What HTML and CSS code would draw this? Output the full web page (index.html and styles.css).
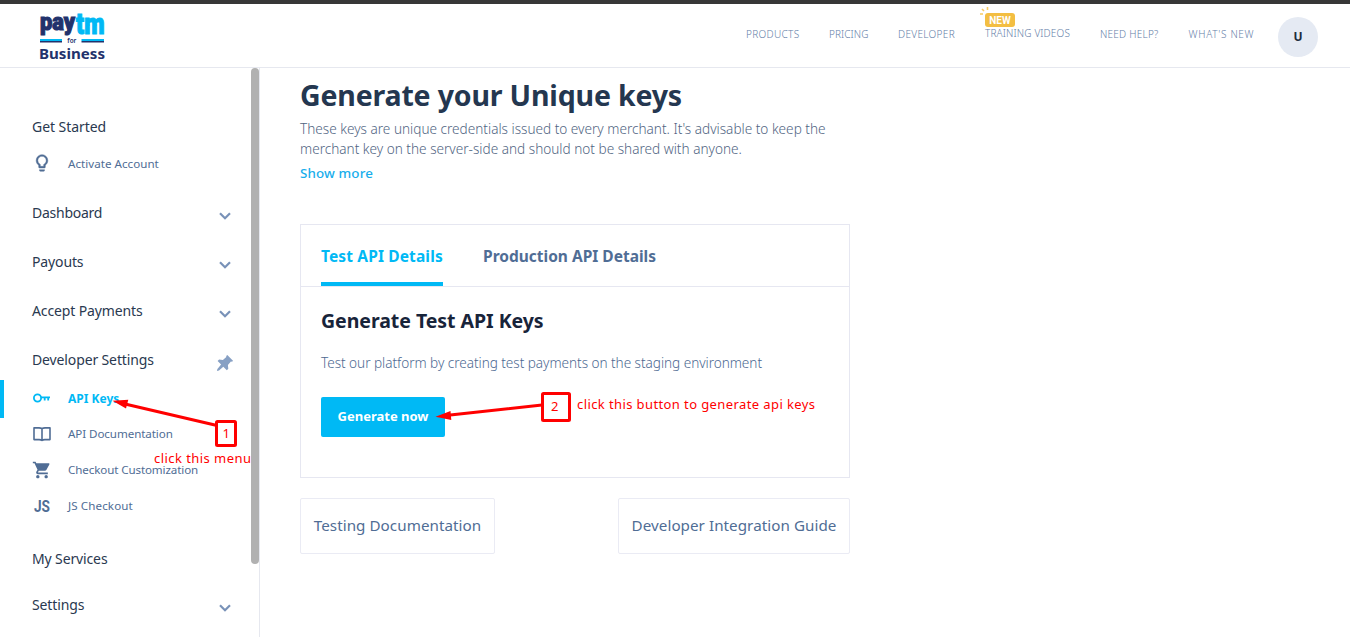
FILE: index.html
```html
<!DOCTYPE html>
<html lang="en">
<head>
<meta charset="utf-8">
<title>Generate your Unique keys</title>
<link rel="stylesheet" href="styles.css">
</head>
<body>
<header class="header">
  <svg class="logo" width="70" height="50" viewBox="38 12 70 50" role="img" aria-label="Paytm for Business">
    <g class="logo-brand">
      <text class="navy" font-size="23" x="40" y="30.3" textLength="35" lengthAdjust="spacingAndGlyphs">pay</text>
      <text class="cyan" font-size="29" x="76" y="33.500" textLength="28.5" lengthAdjust="spacingAndGlyphs">tm</text>
    </g>
    <path class="cyan" d="M40 39h22v2H40zM81.500 39H104v2H81.500z"/>
    <path class="navy" d="M40 41h22v1.500H40zM81.500 41H104v1.500H81.500z"/>
    <text class="navy logo-for" x="67.300" y="43" textLength="9" lengthAdjust="spacingAndGlyphs">for</text>
    <text class="navy logo-business" x="39" y="58.500" textLength="66" lengthAdjust="spacingAndGlyphs">Business</text>
  </svg>
  <nav class="nav">
    <a class="nav-products">PRODUCTS</a>
    <a class="nav-pricing">PRICING</a>
    <a class="nav-developer">DEVELOPER</a>
    <a class="nav-training">TRAINING VIDEOS
      <span class="badge">NEW</span>
      <svg class="spark" width="12" height="10" viewBox="0 0 12 10"><path d="M1 7h3M3 2l2 2M8.500 0v3" fill="none" stroke="#f6ca62" stroke-width="1.600"/></svg>
    </a>
    <a class="nav-help">NEED HELP?</a>
    <a class="nav-new">WHAT'S NEW</a>
  </nav>
  <div class="avatar">U</div>
</header>
<div class="body">
  <aside class="sidebar">
    <div class="menu">
      <div class="section first">Get Started</div>
      <div class="item"><svg class="icon" width="20" height="20" viewBox="0 0 24 24"><path fill="currentColor" stroke="currentColor" stroke-width=".5" d="M9 21c0 .6.400 1 1 1h4c.6 0 1-.400 1-1v-1H9v1zm3-19C8.100 2 5 5.100 5 9c0 2.400 1.200 4.500 3 5.700V17c0 .6.400 1 1 1h6c.6 0 1-.400 1-1v-2.300c1.800-1.300 3-3.400 3-5.700 0-3.900-3.100-7-7-7zm2.900 11.100-.900.600V16h-4v-2.300l-.800-.600A5 5 0 0 1 7 9a5 5 0 0 1 10 0c0 1.600-.800 3.200-2.100 4.100z"/></svg><span class="t-activate">Activate Account</span></div>
      <div class="section t-dash">Dashboard<svg class="chev" width="12" height="8" viewBox="0 0 12 8"><path d="M1 1.200l5 5 5-5"/></svg></div>
      <div class="section">Payouts<svg class="chev" width="12" height="8" viewBox="0 0 12 8"><path d="M1 1.200l5 5 5-5"/></svg></div>
      <div class="section">Accept Payments<svg class="chev" width="12" height="8" viewBox="0 0 12 8"><path d="M1 1.200l5 5 5-5"/></svg></div>
      <div class="section">Developer Settings<svg class="pin" width="18" height="18" viewBox="0 0 18 18"><path fill="#87a0c4" d="M11.300 1 17 6.700l-.900 1-1.200-.100-3 3.400.4 3.700-1.500 1.500-3.500-3.400L3 16.500.9 17l.5-2.100 3.700-4.300L1.600 7l1.500-1.500 3.800.4L10.300 3l-.100-1.100z"/></svg></div>
      <div class="item active"><svg class="icon" width="20" height="20" viewBox="0 0 20 20"><g fill="none" stroke="currentColor"><circle cx="5.500" cy="10" r="3.600" stroke-width="1.800"/><path stroke-width="1.800" d="M9 9.400h9M12.700 9.400v3.200M16.200 9.400v3.200"/></g></svg><span>API Keys</span></div>
      <div class="item doc"><svg class="icon" width="20" height="20" viewBox="0 0 20 20"><path fill="none" stroke="currentColor" stroke-width="1.600" stroke-linejoin="round" d="M10 4.500C9 4 8 3.900 7 3.900H2v11.700h5.200c1.200 0 2.100.3 2.800.9.700-.6 1.600-.9 2.800-.9H18V3.900h-5c-1 0-2 .1-3 .6zM10 4.500v12"/></svg><span>API Documentation</span></div>
      <div class="item cart"><svg class="icon" width="20" height="20" viewBox="0 0 24 24"><path fill="currentColor" d="M7 18c-1.100 0-2 .9-2 2s.9 2 2 2 2-.9 2-2-.9-2-2-2zM1 2v2h2l3.600 7.600L5.200 14c-.2.300-.2.600-.2 1 0 1.100.9 2 2 2h12v-2H7.400c-.100 0-.200-.100-.200-.200V14.600l.900-1.600h7.400c.8 0 1.400-.4 1.700-1l3.600-6.500C21.200 4.700 20.700 4 20 4H5.200l-.9-2H1zm16 16c-1.100 0-2 .9-2 2s.9 2 2 2 2-.9 2-2-.9-2-2-2z"/></svg><span>Checkout Customization</span></div>
      <div class="item js"><svg class="icon js-icon" width="20" height="20" viewBox="0 0 20 20"><text x="2" y="16.300" textLength="16" lengthAdjust="spacingAndGlyphs">JS</text></svg><span>JS Checkout</span></div>
      <div class="section services">My Services</div>
      <div class="section settings">Settings<svg class="chev" width="12" height="8" viewBox="0 0 12 8"><path d="M1 1.200l5 5 5-5"/></svg></div>
    </div>
    <div class="scroll-thumb"></div>
  </aside>
  <main class="main">
    <h1>Generate your Unique keys</h1>
    <p class="intro">These keys are unique credentials issued to every merchant. It's advisable to keep the<br>merchant key on the server-side and should not be shared with anyone.</p>
    <a class="more">Show more</a>
    <section class="card">
      <div class="tabs">
        <div class="tab selected">Test API Details</div>
        <div class="tab">Production API Details</div>
      </div>
      <div class="panel">
        <h2>Generate Test API Keys</h2>
        <p class="desc">Test our platform by creating test payments on the staging environment</p>
        <button class="generate">Generate now</button>
      </div>
    </section>
    <div class="links">
      <a class="link testing">Testing Documentation</a>
      <a class="link guide">Developer Integration Guide</a>
    </div>
  </main>
</div>
<svg class="notes" width="1350" height="637" viewBox="0 0 1350 637">
  <path class="note-line" d="M217 425.500 125 404M542 405 448 415.300"/>
  <path class="note-head" d="M112.500 400.800 128.300 399.800 126 408.600zM435.500 416.800 450.500 411 451.300 420z"/>
  <rect class="note-box" x="216.500" y="421.500" width="19" height="24" rx="1"/>
  <rect class="note-box" x="542.500" y="393.500" width="27" height="27" rx="1"/>
  <text x="222.500" y="438">1</text>
  <text x="551" y="411">2</text>
  <text x="154" y="463" textLength="97">click this menu</text>
  <text x="577" y="409" textLength="238">click this button to generate api keys</text>
</svg>
</body>
</html>
```

FILE: styles.css
```css
* { box-sizing: border-box; }
body {
  margin: 0;
  height: 637px;
  overflow: hidden;
  background: #fff;
  font-family: "Noto Sans", "Open Sans", sans-serif;
  color: #2a3950;
}
h1, h2, p { margin: 0; }

.header {
  height: 68px;
  border-top: 4px solid #373737;
  border-bottom: 1px solid #e6e8ef;
  display: flex;
  align-items: flex-start;
  padding: 8px 32px 0 38px;
}
.logo { flex: none; overflow: visible; }
.navy { fill: #22326c; }
.cyan { fill: #00b9f5; }
.logo-brand { font-family: Roboto, sans-serif; font-weight: 900; stroke-width: 1.1; }
.logo-brand .navy { stroke: #22326c; }
.logo-brand .cyan { stroke: #00b9f5; }
.logo-for { font-size: 7.5px; font-weight: 600; }
.logo-business { font-size: 14.5px; font-weight: 700; }

.nav {
  margin-left: auto;
  display: flex;
  font-size: 10px;
  font-weight: 300;
  line-height: 14px;
  color: #6580a8;
  white-space: nowrap;
  padding-top: 15px;
}
.nav a { flex: none; }
.nav-products { width: 83px; letter-spacing: 0.32px; }
.nav-pricing { width: 69px; letter-spacing: 0.09px; }
.nav-developer { width: 87px; letter-spacing: 0.33px; }
.nav-training { width: 115px; letter-spacing: 0.15px; position: relative; top: -1px; }
.nav-help { width: 88.5px; letter-spacing: 0.24px; }
.nav-new { width: 89.5px; letter-spacing: 0.7px; }
.badge {
  position: absolute;
  left: 0;
  top: -13px;
  width: 30px;
  height: 14px;
  border-radius: 3px;
  background: #f3be42;
  color: #fff;
  font: 700 10px/15px Roboto, sans-serif;
  letter-spacing: 0.1px;
  text-align: center;
}
.spark { position: absolute; left: -6px; top: -19px; }
.avatar {
  flex: none;
  width: 40px;
  height: 40px;
  margin-top: 5px;
  border-radius: 50%;
  background: #e5eaf3;
  color: #202b3c;
  font-size: 12px;
  font-weight: 700;
  line-height: 40px;
  text-align: center;
}

.body { display: flex; height: 569px; }
.sidebar {
  width: 260px;
  flex: none;
  border-right: 1px solid #e6e8ef;
  display: flex;
}
.menu { width: 251px; flex: none; }
.scroll-thumb { width: 8px; height: 496px; border-radius: 4px; background: #b1b1b1; }
.section {
  height: 49px;
  padding: 0 18px 0 32px;
  display: flex;
  align-items: center;
  justify-content: space-between;
  font-size: 14px;
  letter-spacing: -0.13px;
}
.section.first { height: 36px; margin-top: 40px; letter-spacing: -0.06px; }
.first + .item { margin-top: 1px; }
.t-dash { margin-top: 7px; letter-spacing: -0.25px; }
.section .chev { margin: 6px 2px 0 0; }
.chev path { fill: none; stroke: #7992b8; stroke-width: 2.2; }
.pin { margin: 6px -1px 0 0; }
.item {
  height: 36px;
  padding-left: 32px;
  display: flex;
  align-items: center;
  font-size: 11.6px;
  color: #506d95;
}
.item .icon { width: 20px; margin-right: 16px; flex: none; }
.t-activate { letter-spacing: 0.03px; }
.item.active {
  height: 38px;
  margin-top: -4px;
  padding: 0 0 2px 28px;
  border-left: 4px solid #00b9f5;
  color: #00b9f5;
  font-size: 12px;
  font-weight: 700;
}
.doc { margin-top: -2px; letter-spacing: -0.08px; }
.doc span, .cart span, .js span { margin-top: -2px; }
.cart { letter-spacing: -0.11px; }
.js { letter-spacing: 0.1px; }
.js-icon { font: 700 17px Roboto, sans-serif; fill: #506d95; letter-spacing: 0; overflow: visible; }
.services { margin-top: 10px; }
.section.settings { margin-top: -3px; }

.main { width: 590px; padding: 6px 0 0 40px; }
h1 {
  font-size: 28.5px;
  line-height: 42px;
  font-weight: 700;
  letter-spacing: -0.17px;
  color: #243750;
}
.intro, .desc { font-size: 13.6px; line-height: 20px; font-weight: 300; white-space: nowrap; }
.intro { padding-top: 3px; color: #506482; }
.more { display: block; margin-top: 4px; font-size: 13.4px; line-height: 20px; font-weight: 500; letter-spacing: 0.12px; color: #18aeec; }
.card { width: 550px; height: 254px; margin-top: 41px; border: 1px solid #e6e7f1; }
.tabs { height: 62px; border-bottom: 1px solid #e6e7f1; padding-left: 20px; display: flex; gap: 40px; }
.tab { height: 61px; font-size: 15.5px; line-height: 63px; font-weight: 700; white-space: nowrap; color: #506d95; }
.tab.selected { width: 122px; border-bottom: 4px solid #00b9f5; letter-spacing: 0.13px; color: #00b9f5; }
.panel { padding: 19px 20px 0; }
h2 { font-size: 19.5px; line-height: 30px; font-weight: 700; letter-spacing: -0.04px; color: #18243a; }
.desc { margin-top: 17px; letter-spacing: -0.04px; color: #4c6891; }
.generate {
  display: block;
  width: 124px;
  height: 40px;
  margin-top: 24px;
  padding: 0 0 2px;
  border: 0;
  border-radius: 2px;
  background: #00b9f5;
  color: #fff;
  font: 700 13px "Noto Sans", sans-serif;
}
.links { margin-top: 20px; display: flex; justify-content: space-between; }
.link {
  height: 56px;
  border: 1px solid #eaebf4;
  border-radius: 2px;
  text-align: center;
  font-size: 15.2px;
  line-height: 52px;
  font-weight: 450;
  letter-spacing: 0.05px;
  color: #506d95;
}
.testing { width: 195px; }
.guide { width: 232px; }

/* Tutorial annotations over the page */
.notes { position: absolute; left: 0; top: 0; font-size: 13px; fill: #f00; }
.note-line { fill: none; stroke: #f00; stroke-width: 3; }
.note-head { fill: #f00; }
.note-box { fill: #fff; stroke: #f00; stroke-width: 3; }
```
